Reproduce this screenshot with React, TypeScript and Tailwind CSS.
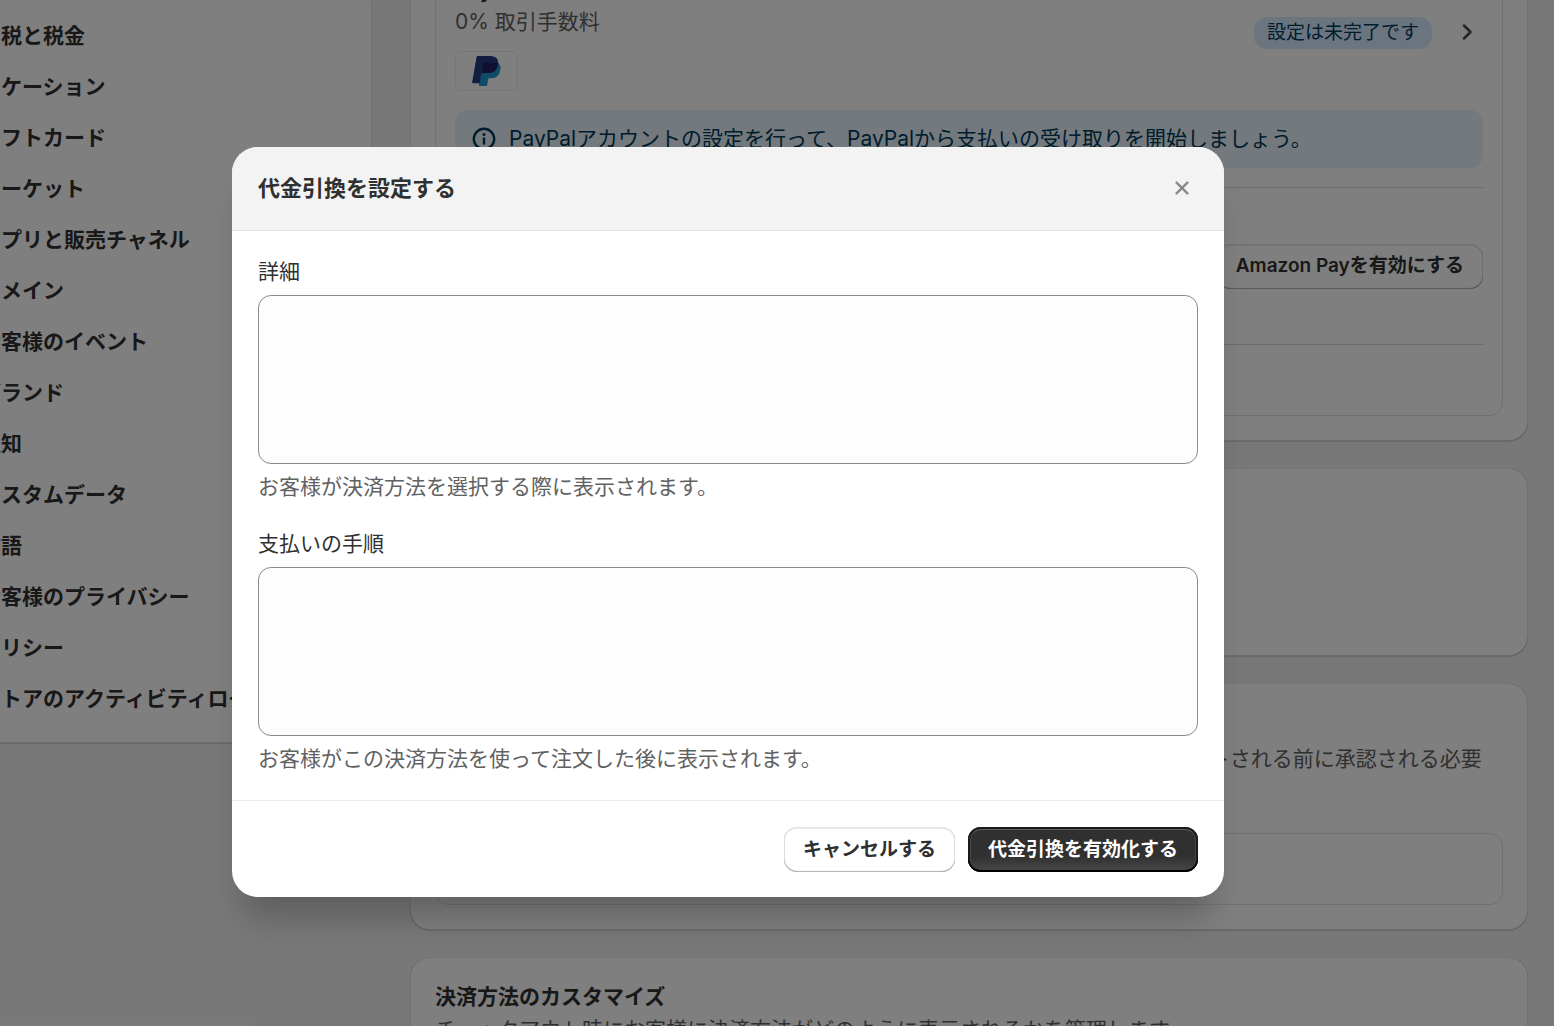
import type { ReactNode } from "react";

const navItems = [
  "関税と税金",
  "ロケーション",
  "ギフトカード",
  "マーケット",
  "アプリと販売チャネル",
  "ドメイン",
  "お客様のイベント",
  "ブランド",
  "通知",
  "カスタムデータ",
  "言語",
  "お客様のプライバシー",
  "ポリシー",
  "ストアのアクティビティログ",
];

function Card({ className = "", children }: { className?: string; children: ReactNode }) {
  return (
    <section
      className={`shrink-0 rounded-[20px] bg-white p-[25px] shadow-[0_1px_1px_rgba(26,26,26,0.16),inset_0_-1px_0_rgba(0,0,0,0.14),inset_1px_0_0_rgba(0,0,0,0.10),inset_-1px_0_0_rgba(0,0,0,0.10),inset_0_1px_0_rgba(0,0,0,0.08)] ${className}`}
    >
      {children}
    </section>
  );
}

function PlainButton({ children }: { children: ReactNode }) {
  return (
    <button
      type="button"
      className="h-[45px] shrink-0 rounded-[13px] bg-white px-[19px] text-[19px] leading-6 font-semibold whitespace-nowrap text-[#303030] shadow-[inset_0_-1px_1px_#b5b5b5,inset_0_-1px_0_#b5b5b5,inset_0_0_0_1px_#e3e3e3,inset_0_2px_0_#ebebeb]"
    >
      {children}
    </button>
  );
}

function PayPalMark() {
  return (
    <svg viewBox="0 0 86 90" className="h-[30px] w-[29px]" role="img" aria-label="PayPal">
      <path
        fill="#2099d0"
        d="M33 21H78Q87 27 85 39Q82 67 57 67H51Q49 67 48 70L45 88Q45 90 42 90H22Q20 90 20 87Z"
      />
      <path
        fill="#253b80"
        d="M17 0H57Q80 2 78 22Q75 51 48 51H31Q28 51 27 54L23 80Q23 82 20 82H2Q0 82 0 79L13 4Q14 0 17 0Z"
      />
      <path fill="#221f60" d="M33 25Q34 21 38 21H78Q76 51 48 51H31Q29 51 28 54Z" />
    </svg>
  );
}

function Field({ id, label, help }: { id: string; label: string; help: string }) {
  return (
    <div className="flex flex-col">
      <label htmlFor={id} className="text-[21px] leading-7 text-[#303030]">
        {label}
      </label>
      <textarea
        id={id}
        aria-describedby={`${id}-help`}
        className="mt-[9px] h-[169px] w-full resize-none rounded-[13px] border border-[#8a8a8a] bg-[#fdfdfd] px-4 py-2 text-[21px] leading-7 text-[#303030]"
      />
      <p id={`${id}-help`} className="mt-[9px] text-[21px] leading-7 text-[#616161]">
        {help}
      </p>
    </div>
  );
}

export default function App() {
  return (
    <div
      lang="ja"
      className="relative h-screen overflow-hidden bg-[#f1f1f1] font-['Inter','Noto_Sans_CJK_JP',sans-serif] text-[21px] leading-7 font-normal text-[#303030]"
    >
      <div className="flex items-start gap-[38px] pr-[26px]">
        <nav
          aria-label="設定"
          className="w-[372px] shrink-0 bg-white pt-[10px] pb-[19px] shadow-[0_1px_1px_rgba(26,26,26,0.16),inset_0_-1px_0_rgba(0,0,0,0.14),inset_-1px_0_0_rgba(0,0,0,0.10)]"
        >
          <ul className="-ml-5">
            {navItems.map((item) => (
              <li key={item}>
                <a href="#" className="flex h-[51px] items-center font-semibold whitespace-nowrap">
                  {item}
                </a>
              </li>
            ))}
          </ul>
        </nav>

        <main className="-mt-[70px] flex min-w-0 flex-1 flex-col gap-[27px]">
          <Card>
            <div className="rounded-[13px] border border-[#e3e3e3] px-[19px] pt-[19px]">
              <div className="flex items-center">
                <div className="flex-1">
                  <h3 className="leading-8 font-semibold">PayPal</h3>
                  <p className="mt-px text-[#616161]">0% 取引手数料</p>
                  <div className="mt-[15px] flex h-10 w-[63px] items-center justify-center rounded-[6px] border border-[#ebebeb]">
                    <PayPalMark />
                  </div>
                </div>
                <span className="rounded-[13px] bg-[#d5ebff] px-[13px] py-1 text-[19px] leading-6 text-[#003a5a]">
                  設定は未完了です
                </span>
                <a href="#" aria-label="PayPalの設定" className="ml-[19px] p-2">
                  <svg viewBox="0 0 32 32" className="-m-2 size-8" fill="none" stroke="#4a4a4a" strokeWidth="2.5" strokeLinecap="round" strokeLinejoin="round">
                    <path d="M13 8.5l6.5 6.5-6.5 6.5" />
                  </svg>
                </a>
              </div>
              <div className="mt-[19px] flex h-[58px] items-center gap-[13px] rounded-[13px] bg-[#e6f2fa] px-[17px] text-[#003a5a]">
                <svg viewBox="0 0 24 24" className="size-6 shrink-0" fill="none" stroke="currentColor" strokeWidth="2.4" strokeLinecap="round">
                  <circle cx="12" cy="12" r="10.2" />
                  <path d="M12 11.5v5" />
                  <circle cx="12" cy="7.4" r="1.5" fill="currentColor" stroke="none" />
                </svg>
                <p>PayPalアカウントの設定を行って、PayPalから支払いの受け取りを開始しましょう。</p>
              </div>
              <div className="mt-[19px] flex h-[157px] items-center justify-between border-t border-[#d4d4d4]">
                <h3 className="font-semibold">Amazon Pay</h3>
                <PlainButton>Amazon Payを有効にする</PlainButton>
              </div>
              <div className="flex h-[71px] items-center border-t border-[#d4d4d4]">
                <a href="#">その他の決済方法</a>
              </div>
            </div>
          </Card>

          <Card className="h-[188px]">
            <h2 className="font-semibold">対応している決済方法</h2>
            <p className="text-[#616161]">お客様が利用できる決済方法です。</p>
          </Card>

          <Card>
            <h2 className="font-semibold">手動での決済方法</h2>
            <p className="mt-[9px] pr-4 text-[#616161]">
              お客様が店舗の外部で直接に行う支払いです。手動決済の注文は、フルフィルメントされる前に承認される必要があります。
            </p>
            <div className="mt-8 flex h-[72px] items-center rounded-[13px] border border-[#e3e3e3] px-[19px]">
              <a href="#">手動の決済方法</a>
            </div>
          </Card>

          <Card>
            <h2 className="mt-px font-semibold">決済方法のカスタマイズ</h2>
            <p className="mt-[5px] text-[#616161]">
              チェックアウト時にお客様に決済方法がどのように表示されるかを管理します。
            </p>
          </Card>
        </main>
      </div>

      <div className="absolute inset-0 flex items-center justify-center bg-black/50 pt-[18px] pr-[98px]">
        <div
          role="dialog"
          aria-modal="true"
          aria-labelledby="dialog-title"
          className="w-full max-w-[992px] overflow-hidden rounded-[26px] bg-white shadow-[0_32px_32px_-13px_rgba(26,26,26,0.28)]"
        >
          <header className="flex h-[84px] items-center justify-between border-b border-[#e3e3e3] bg-[#f3f3f3] px-[26px] pb-[2px]">
            <h2 id="dialog-title" className="text-[22px] leading-8 font-semibold">
              代金引換を設定する
            </h2>
            <button type="button" aria-label="閉じる" className="flex size-8 items-center justify-center">
              <svg viewBox="0 0 14 14" className="size-[14px]" fill="none" stroke="#8a8a8a" strokeWidth="2.4" strokeLinecap="round">
                <path d="M1.6 1.6l10.8 10.8M12.4 1.6L1.6 12.4" />
              </svg>
            </button>
          </header>
          <div className="flex flex-col gap-[29px] px-[26px] pt-[27px] pb-[27px]">
            <Field id="details" label="詳細" help="お客様が決済方法を選択する際に表示されます。" />
            <Field id="steps" label="支払いの手順" help="お客様がこの決済方法を使って注文した後に表示されます。" />
          </div>
          <footer className="flex justify-end gap-[13px] border-t border-[#ebebeb] px-[26px] pt-[26px] pb-[25px]">
            <PlainButton>キャンセルする</PlainButton>
            <button
              type="button"
              className="h-[45px] rounded-[13px] bg-linear-to-b from-[#303030] from-65% to-[#4a4a4a] px-5 text-[19px] leading-6 font-semibold whitespace-nowrap text-white shadow-[inset_0_-2px_0_#000,inset_0_0_0_2px_#1a1a1a,inset_0_3px_0_#5e5e5e,inset_0_0_0_3px_#454545]"
            >
              代金引換を有効化する
            </button>
          </footer>
        </div>
      </div>
    </div>
  );
}
